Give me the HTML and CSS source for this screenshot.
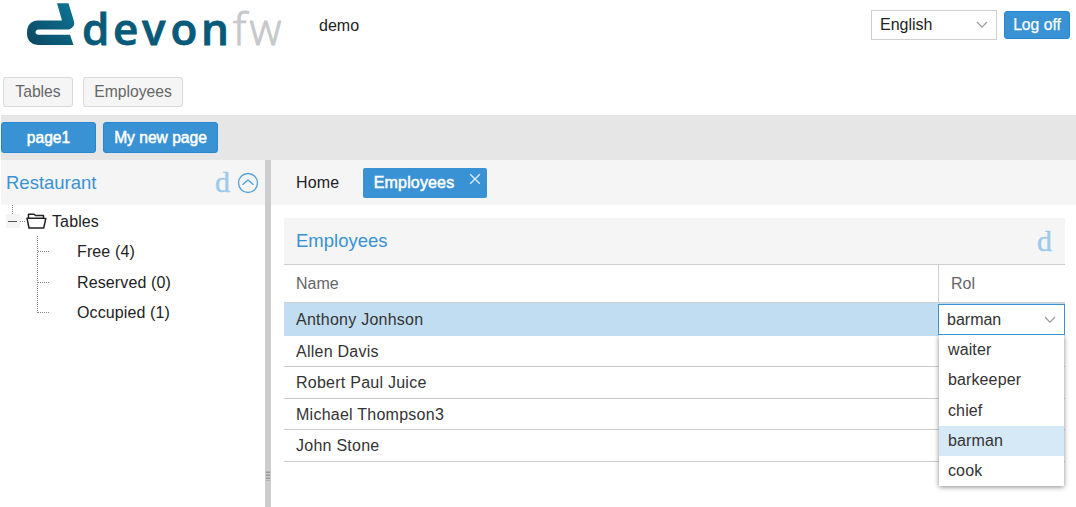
FILE: index.html
```html
<!DOCTYPE html>
<html lang="en">
<head>
<meta charset="utf-8">
<title>devonfw demo</title>
<link rel="stylesheet" href="styles.css">
</head>
<body>
<div class="app">
  <header class="header">
    <svg class="logo" width="268" height="64" viewBox="0 0 268 64" role="img" aria-label="devonfw">
      <defs>
        <linearGradient id="mark" x1="0" y1="1" x2="1" y2="0">
          <stop offset="0" stop-color="#0b4760"/>
          <stop offset="1" stop-color="#0d7698"/>
        </linearGradient>
      </defs>
      <path fill="url(#mark)" d="M37 3.300H48.500L54 21.500Q55.500 27 49 29.500H18.500Q15.500 30 15.500 32.300Q15.500 34.700 18.500 34.700H50L53.500 45H18Q7 44 7 33Q7 21 18 20.500H42Z"/>
      <text class="logo-main" y="44.500" x="62 93 122 150.500 181">devon</text>
      <text class="logo-sub" y="44.500" x="213 229.500">fw</text>
    </svg>
    <span class="app-name">demo</span>
    <div class="session">
      <div class="select"><span>English</span>
        <svg width="12" height="8" viewBox="0 0 12 8"><path class="chevron" d="M1 1L6 6.200L11 1"/></svg>
      </div>
      <button class="btn logoff">Log off</button>
    </div>
  </header>
  <nav class="menu">
    <button class="menu-btn tables-btn">Tables</button>
    <button class="menu-btn employees-btn">Employees</button>
  </nav>
  <nav class="pages">
    <button class="btn page page-one">page1</button>
    <button class="btn page page-new">My new page</button>
  </nav>
  <div class="body">
    <aside class="sidebar">
      <div class="side-head">
        <h2>Restaurant</h2>
        <span class="glyph">d</span>
        <svg width="22" height="22" viewBox="0 0 22 22"><circle class="ring" cx="11" cy="11" r="9.500"/><path class="ring" d="M5.500 12.800L11 8L16.500 12.800"/></svg>
      </div>
      <div class="tree">
        <svg class="tree-lines" width="52" height="118" viewBox="0 0 52 118">
          <rect x="6" y="9" width="14" height="14" fill="#f4f4f4"/>
          <path class="dots" d="M12.500 0V9M20 16.500H25M37.500 31V108M38 46.500H49M38 77.500H49M38 107.500H49"/>
          <path d="M8 16.500H17" stroke="#555"/>
          <path class="folder" d="M29 23L27 13.200H43.500L45.800 13.500L43.700 23ZM28.500 13V9.200H34L35.500 10.500H43.500V13"/>
        </svg>
        <div class="tree-root">Tables</div>
        <div class="tree-item">Free (4)</div>
        <div class="tree-item">Reserved (0)</div>
        <div class="tree-item">Occupied (1)</div>
      </div>
    </aside>
    <div class="splitter"><svg width="6" height="11" viewBox="0 0 6 11"><path d="M2 .5V10M4 .5V10" stroke="#666" stroke-dasharray="1.500 1.500"/></svg></div>
    <main class="content">
      <div class="tabs">
        <span class="tab">Home</span>
        <span class="tab tab-active"><span>Employees</span>
          <svg width="12" height="12" viewBox="0 0 12 12"><path d="M1.200 1.200L10.800 10.800M10.800 1.200L1.200 10.800"/></svg>
        </span>
      </div>
      <section class="panel">
        <div class="panel-head"><h2>Employees</h2><span class="glyph">d</span></div>
        <div class="grid-head"><div class="col-name">Name</div><div class="col-rol">Rol</div></div>
        <div class="row row-selected"><span>Anthony Jonhson</span>
          <div class="combo">
            <div class="combo-field"><span>barman</span><svg width="12" height="8" viewBox="0 0 12 8"><path class="chevron" d="M1 1L6 6.200L11 1"/></svg></div>
            <ul class="options">
              <li>waiter</li><li>barkeeper</li><li>chief</li><li class="chosen">barman</li><li>cook</li>
            </ul>
          </div>
        </div>
        <div class="row">Allen Davis</div>
        <div class="row">Robert Paul Juice</div>
        <div class="row">Michael Thompson3</div>
        <div class="row">John Stone</div>
      </section>
    </main>
  </div>
</div>
</body>
</html>
```
FILE: styles.css
```css
* { box-sizing: border-box; }
body { margin: 0; background: #fff; color: #222; font: 16px/20px "Liberation Sans", Arial, sans-serif; overflow: hidden; }
button { font: inherit; padding: 0; margin: 0; }
h2 { margin: 0; font-size: 18.5px; font-weight: 400; color: #3892d4; }
.app { height: 507px; padding-left: 1px; display: flex; flex-direction: column; }

.header { height: 77px; display: flex; align-items: flex-start; padding: 0 6px 0 19px; }
.logo { flex: none; overflow: visible; }
.logo-main { font: 600 44px "Open Sans", sans-serif; fill: #075a78; stroke: #075a78; stroke-width: .8px; }
.logo-sub { font: 300 44px "Open Sans", sans-serif; fill: #c6c8c9; stroke: #c6c8c9; stroke-width: 1px; }
.app-name { padding: 16px 0 0 31px; }
.session { margin-left: auto; padding-top: 10px; display: flex; gap: 7px; }
.select { width: 126px; height: 30px; border: 1px solid #cfcfcf; display: flex; align-items: center; justify-content: space-between; padding: 0 8px; }
.chevron { fill: none; stroke: #999; stroke-width: 1.2; }
.btn { background: #3892d4; border: 1px solid #2587d0; border-radius: 3px; color: #fff; }
.logoff { width: 66px; height: 28px; margin-top: 1px; font-size: 15.7px; -webkit-text-stroke: .25px #fff; }

.menu { height: 38px; display: flex; gap: 10px; padding-left: 2px; }
.menu-btn { height: 30px; background: #f5f5f5; border: 1px solid #d8d8d8; border-radius: 3px; color: #666; font-size: 15.7px; }
.tables-btn { width: 70px; }
.employees-btn { width: 100px; }

.pages { height: 45px; background: #e6e6e6; display: flex; gap: 7px; padding-top: 7px; }
.page { height: 31px; font-size: 15.6px; -webkit-text-stroke: .5px #fff; }
.page-one { width: 95px; }
.page-new { width: 115px; }

.body { flex: 1; display: flex; min-height: 0; }
.sidebar { width: 264px; flex: none; }
.side-head { height: 45px; background: #f5f5f5; display: flex; align-items: center; padding: 0 6px 0 5px; }
.side-head .glyph { margin-left: auto; margin-right: 7px; }
.glyph { font: 30px/30px "Liberation Serif", serif; color: #9dc9ec; -webkit-text-stroke: .4px #9dc9ec; padding-bottom: 1px; }
.ring { fill: none; stroke: #5aa2d6; stroke-width: 1.4; }
.tree { position: relative; padding-top: 2px; }
.tree-lines { position: absolute; left: -1px; top: 0; }
.tree-root, .tree-item { height: 30.3px; line-height: 30px; letter-spacing: .12px; }
.tree-root { padding-left: 51px; }
.tree-item { padding-left: 76px; }
.dots { fill: none; stroke: #888; stroke-dasharray: 1 1; }
.folder { fill: none; stroke: #222; stroke-width: 1.5; stroke-linejoin: round; }
.splitter { width: 6px; flex: none; background: #cdcdcd; padding-top: 311px; }
.splitter svg { display: block; }

.content { flex: 1; min-width: 0; }
.tabs { height: 45px; background: #f5f5f5; display: flex; align-items: center; gap: 23.5px; padding-left: 25px; }
.tab { letter-spacing: .15px; }
.tab-active { width: 124px; height: 30px; background: #3892d4; border-radius: 2px; color: #fff; -webkit-text-stroke: .5px #fff; display: flex; justify-content: space-between; padding: 5px 6px 5px 11px; }
.tab-active svg { fill: none; stroke: #d9eaf7; stroke-width: 1.4; }

.panel { margin: 13px 11px 0 13px; }
.panel-head { height: 47px; background: #f5f5f5; border-bottom: 1px solid #cfcfcf; display: flex; align-items: center; justify-content: space-between; padding: 0 13px 0 12px; }
.grid-head { height: 38px; border-bottom: 1px solid #cfcfcf; display: flex; color: #666; line-height: 37px; }
.col-name { flex: 1; padding-left: 12px; }
.col-rol { width: 127px; border-left: 1px solid #cfcfcf; padding-left: 12px; }
.row { height: 31.6px; border-bottom: 1px solid #cbcbcb; padding-left: 12px; line-height: 32px; letter-spacing: .25px; color: #333; }
.row-selected { height: 32.6px; background: #c1ddf1; border: 0; display: flex; justify-content: space-between; line-height: 34px; }
.combo { position: relative; width: 127px; padding-top: 1px; }
.combo-field { height: 31px; background: #fff; border: 1px solid #3892d4; display: flex; align-items: center; justify-content: space-between; padding: 0 8px; line-height: 20px; letter-spacing: 0; }
.options { position: absolute; left: 1px; top: 32px; width: 125px; margin: 0; padding: 0; list-style: none; background: #fff; box-shadow: 0 1px 5px #888; clip-path: inset(0 -8px -8px -8px); letter-spacing: .12px; }
.options li { height: 30.3px; line-height: 29px; padding-left: 9px; }
.options .chosen { background: #d6e9f6; }
```
